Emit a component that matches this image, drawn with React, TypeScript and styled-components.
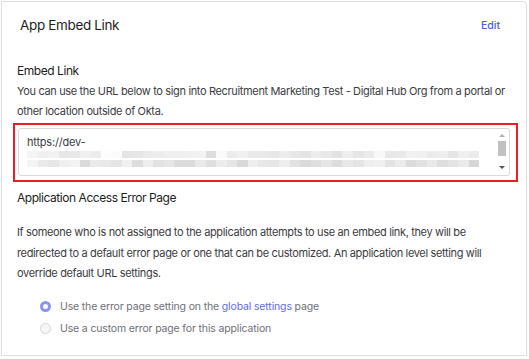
import React from "react";
import styled, { createGlobalStyle } from "styled-components";

const Global = createGlobalStyle`
  html, body { margin: 0; padding: 0; background: #ffffff; }
  body { font-family: Inter, "Noto Sans", sans-serif; color: #1d1d21; }
`;

const Page = styled.div`
  width: 529px;
  height: 359px;
  padding: 1px 2px 3px 1px;
  box-sizing: border-box;
  display: flex;
`;

const Card = styled.section`
  flex: 1;
  border: 1px solid #dedede;
  border-radius: 0 4px 0 0;
  padding: 12px 0 0 0;
  display: flex;
  flex-direction: column;
`;

const Header = styled.div`
  display: flex;
  justify-content: space-between;
  align-items: center;
  padding: 0 26px 0 18px;
  height: 22px;
`;

const Title = styled.h2`
  margin: 0;
  font-size: 13.5px;
  letter-spacing: -0.35px;
  font-weight: 400;
  color: #1d1d21;
`;

const EditLink = styled.a`
  font-size: 10.5px;
  font-weight: 500;
  color: #4d5ce6;
  text-decoration: none;
`;

const Body = styled.div`
  padding: 0 8px 0 11px;
  display: flex;
  flex-direction: column;
`;

const SubTitle = styled.h3<{ $top: number }>`
  margin: ${(p) => p.$top}px 0 0 4px;
  font-size: 12px;
  letter-spacing: -0.45px;
  font-weight: 400;
  color: #1d1d21;
  line-height: 18px;
`;

const Para = styled.p<{ $top: number; $lh: number }>`
  margin: ${(p) => p.$top}px 0 0 4px;
  font-size: 11px;
  letter-spacing: -0.35px;
  line-height: ${(p) => p.$lh}px;
  color: #3c3c42;
`;

const Highlight = styled.div`
  margin-top: 2px;
  border: 2px solid #ee1c24;
  padding: 3px 6px 4px 3px;
  height: 59px;
  box-sizing: border-box;
`;

const UrlBox = styled.div`
  height: 48px;
  border: 1px solid #d9d9de;
  border-radius: 3px;
  display: flex;
  box-sizing: border-box;
`;

const UrlText = styled.div`
  flex: 1;
  padding: 6px 0 0 8px;
  font-size: 11px;
  letter-spacing: -0.2px;
  color: #3c3c42;
  line-height: 14px;
  display: flex;
  flex-direction: column;
  gap: 2px;
`;

const BlurRow = styled.div`
  display: flex;
  height: 7px;
  margin-right: 18px;
`;

const Blot = styled.span`
  flex: 1;
  height: 100%;
`;

const ScrollBar = styled.div`
  width: 10px;
  margin: 2px 2px 2px 0;
  display: flex;
  flex-direction: column;
  align-items: center;
`;

const Arrow = styled.div<{ $up?: boolean }>`
  width: 0;
  height: 0;
  border-left: 3px solid transparent;
  border-right: 3px solid transparent;
  ${(p) =>
    p.$up
      ? "border-bottom: 3px solid #b0b0b0; margin-top: 3px;"
      : "border-top: 3px solid #505050; margin-bottom: 4px;"}
`;

const Thumb = styled.div`
  width: 8px;
  height: 15px;
  background: #c1c1c1;
  margin-top: 4px;
  flex: none;
`;

const Spacer = styled.div`
  flex: 1;
`;

const Options = styled.div`
  margin: 14px 0 0 27px;
  display: flex;
  flex-direction: column;
  gap: 4px;
`;

const Option = styled.label`
  display: flex;
  align-items: center;
  gap: 9px;
  font-size: 10.5px;
  letter-spacing: -0.15px;
  line-height: 18px;
  color: #707078;
`;

const Radio = styled.span<{ $checked?: boolean }>`
  width: 11px;
  height: 11px;
  border-radius: 50%;
  box-sizing: border-box;
  flex: none;
  ${(p) =>
    p.$checked
      ? "background: #fff; border: 3.5px solid #8c96ee;"
      : "background: #f6f6f8; border: 1px solid #d6d6dc;"}
`;

const InlineLink = styled.a`
  color: #5f6ce8;
  text-decoration: none;
`;

const row1 = [
  "#f4f4f4","#efefef","#f2f2f2","#e6e6e6","#e8e8e8","#f0f0f0","#ececec","#fdfdfd","#fbfbfb",
  "#e4e4e4","#e6e6e6","#ebebeb","#ececec","#efefef","#efefef","#f1f1f1","#f2f2f2","#dedede",
  "#f9f9f9","#ececec","#f0f0f0","#eaeaea","#e9e9e9","#e7e7e7","#ececec","#e7e7e7","#e4e4e4",
  "#ececec","#e8e8e8","#e2e2e2","#ededed","#e6e6e6","#ebebeb","#f8f8f8","#e7e7e7","#e9e9e9",
  "#f1f1f1","#f0f0f0","#ebebeb","#ededed","#e6e6e6","#efefef","#ebebeb"
];
const row2 = [
  "#f4f4f4","#eaeaea","#e6e6e6","#efefef","#f2f2f2","#dadada","#eaeaea","#e8e8e8","#e5e5e5",
  "#f0f0f0","#dddddd","#eeeeee","#e2e2e2","#e6e6e6","#dcdcdc","#dcdcdc","#e9e9e9","#dfdfdf",
  "#ececec","#e5e5e5","#d9d9d9","#eeeeee","#e8e8e8","#e6e6e6","#eeeeee","#e2e2e2","#dadada",
  "#dfdfdf","#e6e6e6","#dcdcdc","#e8e8e8","#e4e4e4","#eeeeee","#f0f0f0","#e3e3e3","#ebebeb",
  "#dcdcdc","#e1e1e1","#e9e9e9","#dedede","#e3e3e3","#eaeaea","#d6d6d6"
];

export default function App() {
  return (
    <>
      <Global />
      <Page>
        <Card>
          <Header>
            <Title>App Embed Link</Title>
            <EditLink href="#">Edit</EditLink>
          </Header>
          <Body>
            <SubTitle $top={26}>Embed Link</SubTitle>
            <Para $top={2} $lh={19.5}>
              You can use the URL below to sign into Recruitment Marketing Test - Digital Hub Org from a portal or
              other location outside of Okta.
            </Para>
            <Highlight>
              <UrlBox>
                <UrlText>
                  <span>https://dev-</span>
                  <BlurRow>
                    {row1.map((c, i) => (
                      <Blot key={i} style={{ background: c }} />
                    ))}
                  </BlurRow>
                  <BlurRow>
                    {row2.map((c, i) => (
                      <Blot key={i} style={{ background: c }} />
                    ))}
                  </BlurRow>
                </UrlText>
                <ScrollBar>
                  <Arrow $up />
                  <Thumb />
                  <Spacer />
                  <Arrow />
                </ScrollBar>
              </UrlBox>
            </Highlight>
            <SubTitle $top={7}>Application Access Error Page</SubTitle>
            <Para $top={15} $lh={20.5}>
              If someone who is not assigned to the application attempts to use an embed link, they will be
              redirected to a default error page or one that can be customized. An application level setting will
              override default URL settings.
            </Para>
            <Options>
              <Option>
                <Radio $checked />
                <span>
                  Use the error page setting on the <InlineLink href="#">global settings</InlineLink> page
                </span>
              </Option>
              <Option>
                <Radio />
                <span>Use a custom error page for this application</span>
              </Option>
            </Options>
          </Body>
        </Card>
      </Page>
    </>
  );
}
